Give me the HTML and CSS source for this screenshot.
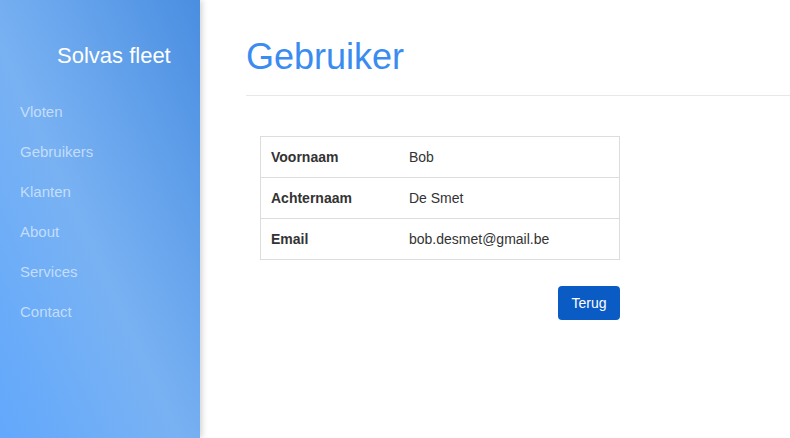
FILE: index.html
```html
<!DOCTYPE html>
<html>
<head>
<meta charset="utf-8">
<link rel="stylesheet" href="styles.css">
</head>
<body>
<div class="layout">
  <aside class="sidebar">
    <div class="brand">Solvas fleet</div>
    <nav class="nav">
      <a href="#">Vloten</a>
      <a href="#">Gebruikers</a>
      <a href="#">Klanten</a>
      <a href="#">About</a>
      <a href="#">Services</a>
      <a href="#">Contact</a>
    </nav>
  </aside>
  <main class="main">
    <h1 class="title">Gebruiker</h1>
    <div class="divider"></div>
    <div class="content">
      <table class="details">
        <tr><th>Voornaam</th><td>Bob</td></tr>
        <tr><th>Achternaam</th><td>De Smet</td></tr>
        <tr><th>Email</th><td>bob.desmet@gmail.be</td></tr>
      </table>
      <div class="actions">
        <button class="btn">Terug</button>
      </div>
    </div>
  </main>
</div>
</body>
</html>
```
FILE: styles.css
```css
html, body {
  margin: 0;
  padding: 0;
  height: 100%;
}
body {
  font-family: "Liberation Sans", Arial, sans-serif;
  font-size: 14px;
  color: #333;
  background: #fff;
  overflow: hidden;
}
.layout {
  display: flex;
  height: 438px;
}
.sidebar {
  width: 200px;
  flex: 0 0 200px;
  background: linear-gradient(to top right, #62a8fc 0%, #79b2f3 45%, #4a8ee1 100%);
  box-shadow: 2px 0 6px rgba(0, 0, 0, 0.18);
  position: relative;
  z-index: 1;
}
.brand {
  color: #fff;
  font-size: 22px;
  padding: 43px 0 0 57px;
  line-height: 26px;
  height: 59px;
}
.nav {
  display: flex;
  flex-direction: column;
  padding: 0 0 0 20px;
}
.nav a {
  color: rgba(220, 235, 255, 0.78);
  text-decoration: none;
  font-size: 15px;
  line-height: 20px;
  height: 40px;
}
.main {
  flex: 1;
  padding: 0 0 0 46px;
}
.title {
  margin: 0;
  padding-top: 37px;
  font-size: 36px;
  font-weight: normal;
  line-height: 40px;
  color: #3b8cf0;
  height: 40px;
}
.divider {
  margin-top: 18px;
  border-top: 1px solid #e8e8e8;
}
.content {
  padding: 40px 0 0 14px;
  width: 360px;
}
.details {
  width: 360px;
  border-collapse: collapse;
  border: 1px solid #ddd;
}
.details th, .details td {
  border-top: 1px solid #ddd;
  padding: 10px 10px;
  line-height: 20px;
  text-align: left;
  vertical-align: middle;
}
.details th {
  width: 118px;
  font-weight: bold;
  color: #333;
}
.details td {
  color: #333;
}
.actions {
  display: flex;
  justify-content: flex-end;
  padding-top: 26px;
}
.btn {
  background: #0a5bc4;
  color: #fff;
  border: none;
  border-radius: 4px;
  font-family: "Liberation Sans", Arial, sans-serif;
  font-size: 14px;
  width: 62px;
  height: 34px;
  padding: 0;
}
```
